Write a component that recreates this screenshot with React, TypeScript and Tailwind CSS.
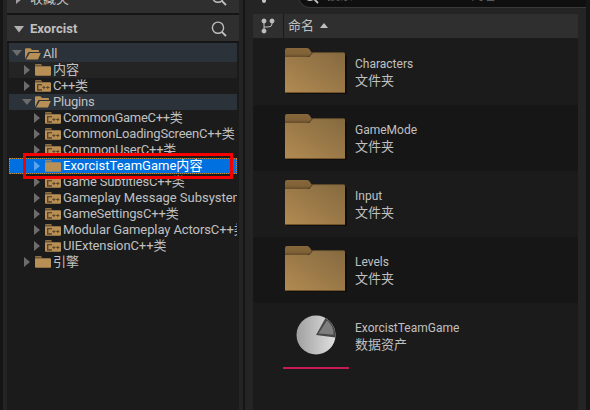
import React from "react";

const latin = "font-['Roboto','Noto_Sans_CJK_SC',sans-serif]";

function SearchIcon({ className = "" }: { className?: string }) {
  return (
    <svg width="16" height="16" viewBox="0 0 16 16" fill="none" stroke="#c0c0c0" strokeWidth="1.4" className={className}>
      <circle cx="7" cy="6.7" r="5.6" />
      <path d="M10.8 10.8 15 15" strokeWidth="1.8" />
    </svg>
  );
}

function SmallFolder({ kind }: { kind: "open" | "plain" | "cpp" }) {
  if (kind === "open") {
    return (
      <svg width="16" height="12" viewBox="0 0 16 12" className="shrink-0" fill="#b88f55">
        <path d="M0 11V1.2Q0 .3 1 .3H5.5L7 2H13Q14 2 14 3V4H4.2Q3.4 4 3 4.8Z" />
        <path d="M4.8 5H15.8L13 11.6H1Z" />
      </svg>
    );
  }
  return (
    <svg width="16" height="12" viewBox="0 0 16 12" className="shrink-0">
      <path d="M0 1Q0 .3 .8 .3H6L7.3 1.6H0Z" fill="#b88f55" />
      <path d="M0 2.3H15Q16 2.3 16 3.2V10.8Q16 11.7 15 11.7H1Q0 11.7 0 10.8Z" fill="#b88f55" />
      {kind === "cpp" && (
        <g fill="none" stroke="#5b482c">
          <path d="M6.2 5.6V4.6H2.7V10H6.2V9" strokeWidth="1.4" />
          <path d="M7.3 7.5H10.5M8.9 5.9V9.1M11.2 7.5H14.4M12.8 5.9V9.1" strokeWidth="1" />
        </g>
      )}
    </svg>
  );
}

type Node = { label: string; depth: number; kind: "open" | "plain" | "cpp"; spacing?: string; tone?: string; selected?: boolean };

const nodes: Node[] = [
  { label: "内容", depth: 1, kind: "plain", tone: "bg-[#242424]" },
  { label: "C++类", depth: 1, kind: "cpp", spacing: "tracking-[-0.4px]" },
  { label: "Plugins", depth: 1, kind: "open", spacing: "tracking-[-0.2px]", tone: "bg-[#2c323a]" },
  { label: "CommonGameC++类", depth: 2, kind: "cpp", spacing: "tracking-[-0.3px]" },
  { label: "CommonLoadingScreenC++类", depth: 2, kind: "cpp", spacing: "tracking-[-0.18px]" },
  { label: "CommonUserC++类", depth: 2, kind: "cpp", spacing: "tracking-[-0.2px]" },
  { label: "ExorcistTeamGame内容", depth: 2, kind: "plain", spacing: "tracking-[0.02px]", selected: true },
  { label: "Game SubtitlesC++类", depth: 2, kind: "cpp", spacing: "tracking-[-0.15px]" },
  { label: "Gameplay Message SubsystemC++类", depth: 2, kind: "cpp", spacing: "tracking-[-0.02px]" },
  { label: "GameSettingsC++类", depth: 2, kind: "cpp", spacing: "tracking-[-0.15px]" },
  { label: "Modular Gameplay ActorsC++类", depth: 2, kind: "cpp", spacing: "tracking-[-0.1px]" },
  { label: "UIExtensionC++类", depth: 2, kind: "cpp", spacing: "tracking-[-0.1px]" },
  { label: "引擎", depth: 1, kind: "plain" },
];

function Arrow({ open, light }: { open: boolean; light?: boolean }) {
  return (
    <svg width="10" height="10" viewBox="0 0 10 10" className="shrink-0" fill={light ? "#5ba3ef" : "#6c6c6c"}>
      {open ? <path d="M0 2H10L5 8Z" /> : <path d="M2 0 8 5 2 10Z" />}
    </svg>
  );
}

function TreeRow({ node }: { node: Node }) {
  const pad = node.depth === 1 ? "pl-[13px]" : "pl-[23px]";
  return (
    <div className={`flex h-4 items-center ${pad} ${node.tone ?? ""} ${node.selected ? "bg-[#0070e0] text-white outline-1 -outline-offset-1 outline-dotted outline-[#c28b3c]" : ""}`}>
      <Arrow open={node.kind === "open"} light={node.selected} />
      <span className="ml-[3px] flex"><SmallFolder kind={node.kind} /></span>
      <span className={`ml-0.5 whitespace-nowrap text-[13px] leading-4 ${node.spacing ?? ""}`}>{node.label}</span>
    </div>
  );
}

function BigFolder() {
  return (
    <svg width="64" height="48" viewBox="0 0 64 48" className="shrink-0">
      <defs>
        <linearGradient id="folder" x1="0" y1="1" x2="1" y2="0">
          <stop offset="0" stopColor="#b28b52" />
          <stop offset=".45" stopColor="#9d7b49" />
          <stop offset="1" stopColor="#846a40" />
        </linearGradient>
        <linearGradient id="tab" x1="0" y1="0" x2="0" y2="1">
          <stop offset="0" stopColor="#87673b" />
          <stop offset=".65" stopColor="#806238" />
          <stop offset="1" stopColor="#654c29" />
        </linearGradient>
      </defs>
      <path d="M1 7H60Q62 7 62 9V46H2Z" fill="#0e0e0e" />
      <path d="M0 9H24L28 4.5H58.5Q60 4.5 60 6V45H0Z" fill="url(#folder)" />
      <path d="M0 2Q0 0 2 0H22Q24 0 25 2L27 5L24.5 8Q24 9 22 9H0Z" fill="url(#tab)" />
      <path d="M27 4.6H59.5" stroke="#60492a" strokeWidth=".8" />
      <path d="M0 44.5H60" stroke="#725329" />
    </svg>
  );
}

function PieIcon() {
  return (
    <svg width="40" height="40" viewBox="0 0 40 40">
      <defs>
        <linearGradient id="pie">
          <stop offset="0" stopColor="#a0a0a0" />
          <stop offset="1" stopColor="#e0e0e0" />
        </linearGradient>
      </defs>
      <circle cx="20" cy="20" r="19.5" fill="url(#pie)" />
      <path d="M20 20 29.5 3A19.5 19.5 0 0 1 39.3 22.5Z" fill="#484848" />
      <path d="M22.5 18.5 31 5.5A17 17 0 0 1 37.5 19.7Z" fill="#7e7e7e" />
    </svg>
  );
}

const assets = [
  { name: "Characters", tone: "h-[67px] bg-[#1b1b1b] pt-[10px]" },
  { name: "GameMode", tone: "h-[66px] bg-[#161616] pt-[9px]" },
  { name: "Input", tone: "h-[66px] bg-[#1b1b1b] pt-[9px]" },
  { name: "Levels", tone: "h-[66px] bg-[#161616] pt-[9px]" },
];

export default function App() {
  return (
    <div className={`relative flex h-[410px] w-[590px] overflow-hidden bg-[#151515] text-[#c0c0c0] ${latin}`}>
      <aside className="ml-[3px] flex h-full w-60 flex-col border-x-4 border-[#242424] bg-[#1b1b1b]">
        <div className="flex h-[13px] shrink-0 items-start overflow-hidden bg-[#2f2f2f]">
          <svg width="7" height="10" viewBox="0 0 7 10" className="ml-[9px] -mt-[6px] shrink-0" fill="#a0a0a0"><path d="M0 0 6 5 0 10Z" /></svg>
          <span className="-mt-[9px] ml-[7px] text-[13px] leading-4">收藏夹</span>
          <SearchIcon className="ml-auto mr-3 -mt-[10px] shrink-0" />
        </div>
        <div className="h-0.5 shrink-0 bg-[#151515]" />
        <div className="flex h-[26px] shrink-0 items-center bg-[#2f2f2f]">
          <svg width="10" height="7" viewBox="0 0 10 7" className="ml-[7px] mt-0.5" fill="#b0b0b0"><path d="M0 0H10L5 6.5Z" /></svg>
          <span className="ml-[6px] mt-0.5 text-[13px] font-bold leading-4 tracking-[0.05px]">Exorcist</span>
          <SearchIcon className="ml-auto mr-3 mt-px" />
        </div>
        <div className="h-0.5 shrink-0 bg-[#151515]" />
        <div className="mx-0.5 flex flex-col overflow-hidden">
          <div className="flex h-[19px] items-center bg-[#2c323a] pl-[3px]">
            <Arrow open />
            <span className="ml-[3px] mt-0.5 flex"><SmallFolder kind="open" /></span>
            <span className="ml-0.5 mt-0.5 text-[13px] leading-4 tracking-[-0.2px]">All</span>
          </div>
          {nodes.map((node) => <TreeRow key={node.label} node={node} />)}
        </div>
      </aside>

      <main className="ml-0.5 flex h-full w-[341px] flex-col bg-[#242424]">
        <div className="flex h-[14px] shrink-0 items-start overflow-hidden">
          <span className="ml-[17px] h-[3px] w-1 shrink-0 rounded-b-sm bg-[#c0c0c0]" />
          <div className="-mt-4 ml-8 flex h-6 w-[310px] shrink-0 items-start rounded-l-full border border-r-0 border-[#383838] bg-[#0f0f0f]">
            <SearchIcon className="ml-1 mt-[3px]" />
            <span className="ml-2 mt-[2px] text-[13px] leading-4 text-[#5a5a5a]">搜索</span>
            <span className="ml-[118px] mt-[2px] text-[13px] leading-4 text-[#5a5a5a]">内容</span>
          </div>
        </div>
        <section className="mx-2 flex grow flex-col bg-[#1b1b1b]">
          <header className="flex h-6 shrink-0 bg-[#2f2f2f]">
            <div className="flex w-[31px] items-center border-r border-[#191919] pl-2">
              <svg width="14" height="16" viewBox="0 0 14 16" fill="#c0c0c0" stroke="#c0c0c0">
                <path d="M3 3V13M3 9H7Q11 9 11 6V3" fill="none" />
                <circle cx="3" cy="3" r="2" /><circle cx="11" cy="3" r="2" /><circle cx="3" cy="13" r="2" />
              </svg>
            </div>
            <div className="flex items-center pl-1">
              <span className="text-[13px] leading-4">命名</span>
              <svg width="8" height="5" viewBox="0 0 8 5" className="mb-0.5 ml-[6px]" fill="#c0c0c0"><path d="M4 0 8 5H0Z" /></svg>
            </div>
          </header>
          {assets.map(({ name, tone }) => (
            <div key={name} className={`flex shrink-0 pl-8 ${tone}`}>
              <BigFolder />
              <div className="ml-1.5 mt-2 flex flex-col text-[12px]">
                <span className="leading-[17px]">{name}</span>
                <span className="text-[13px] leading-[15px]">文件夹</span>
              </div>
            </div>
          ))}
          <div className="flex pl-[30px] pt-3">
            <div className="flex h-[54px] w-[66px] flex-col items-center border-b-2 border-[#c51c52]"><PieIcon /></div>
            <div className="ml-1.5 mt-[5px] flex flex-col text-[12px]">
              <span className="leading-[17px]">ExorcistTeamGame</span>
              <span className="text-[13px] leading-[15px]">数据资产</span>
            </div>
          </div>
        </section>
      </main>
      <div className="pointer-events-none absolute left-[23px] top-[153px] h-[26px] w-[210px] border-[3px] border-[#f60000]" />
    </div>
  );
}
